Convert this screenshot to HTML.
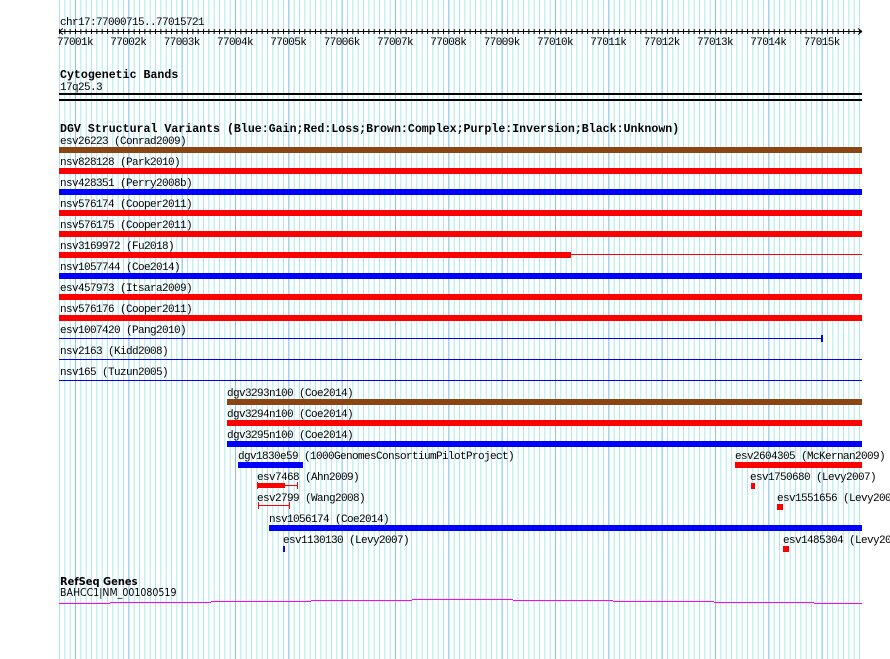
<!DOCTYPE html>
<html><head><meta charset="utf-8"><style>
html,body{margin:0;padding:0;background:#fff;}
svg{display:block;}
text{font-family:"Liberation Mono",monospace;font-size:11px;letter-spacing:-0.6px;fill:#000;}
.b{font-weight:bold;font-size:11.6px;letter-spacing:0;}
</style></head><body>
<svg width="890" height="659" xmlns="http://www.w3.org/2000/svg">
<defs>
<pattern id="mi" patternUnits="userSpaceOnUse" x="59" y="0" width="5.3333" height="10"><rect x="0" y="0" width="1" height="10" fill="#a8e8ee"/></pattern>
<pattern id="ma" patternUnits="userSpaceOnUse" x="75" y="0" width="53.333" height="10"><rect x="0" y="0" width="1" height="10" fill="#84c4ee"/></pattern>
<pattern id="tk" patternUnits="userSpaceOnUse" x="59" y="0" width="5.3333" height="10"><rect x="0" y="0" width="1" height="10" fill="#000"/></pattern>
</defs>
<rect x="59" y="0" width="804" height="659" fill="url(#mi)"/>
<rect x="59" y="0" width="804" height="659" fill="url(#ma)"/>

<text x="60" y="25">chr17:77000715..77015721</text>
<rect x="59" y="31" width="803" height="1" fill="#000"/>
<rect x="59" y="29" width="803" height="5" fill="url(#tk)"/>
<path d="M59 31.5 L63 28.5 M59 31.5 L63 34.5 M862 31.5 L858 28.5 M862 31.5 L858 34.5" stroke="#000" fill="none"/>
<g>
<text x="57" y="45">77001k</text><text x="110.3" y="45">77002k</text><text x="163.7" y="45">77003k</text><text x="217" y="45">77004k</text><text x="270.3" y="45">77005k</text><text x="323.7" y="45">77006k</text><text x="377" y="45">77007k</text><text x="430.3" y="45">77008k</text><text x="483.7" y="45">77009k</text><text x="537" y="45">77010k</text><text x="590.3" y="45">77011k</text><text x="643.7" y="45">77012k</text><text x="697" y="45">77013k</text><text x="750.3" y="45">77014k</text><text x="803.7" y="45">77015k</text>
</g>

<text class="b" x="60" y="78">Cytogenetic Bands</text>
<text x="60" y="90">17q25.3</text>
<rect x="59" y="93" width="803" height="2" fill="#000"/>
<rect x="59" y="99" width="803" height="2" fill="#000"/>

<text class="b" x="60" y="132">DGV Structural Variants (Blue:Gain;Red:Loss;Brown:Complex;Purple:Inversion;Black:Unknown)</text>
<text x="60" y="144">esv26223 (Conrad2009)</text><rect x="59" y="147" width="803" height="6" fill="#8b4513"/>
<text x="60" y="165">nsv828128 (Park2010)</text><rect x="59" y="168" width="803" height="6" fill="#f00"/>
<text x="60" y="186">nsv428351 (Perry2008b)</text><rect x="59" y="189" width="803" height="6" fill="#00f"/>
<text x="60" y="207">nsv576174 (Cooper2011)</text><rect x="59" y="210" width="803" height="6" fill="#f00"/>
<text x="60" y="228">nsv576175 (Cooper2011)</text><rect x="59" y="231" width="803" height="6" fill="#f00"/>
<text x="60" y="249">nsv3169972 (Fu2018)</text><rect x="59" y="252" width="512" height="6" fill="#f00"/><rect x="571" y="254" width="291" height="1" fill="#f00"/>
<text x="60" y="270">nsv1057744 (Coe2014)</text><rect x="59" y="273" width="803" height="6" fill="#00f"/>
<text x="60" y="291">esv457973 (Itsara2009)</text><rect x="59" y="294" width="803" height="6" fill="#f00"/>
<text x="60" y="312">nsv576176 (Cooper2011)</text><rect x="59" y="315" width="803" height="6" fill="#f00"/>
<text x="60" y="333">esv1007420 (Pang2010)</text><rect x="59" y="338" width="763" height="1" fill="#00f"/><rect x="821" y="335" width="2" height="7" fill="#00f"/>
<text x="60" y="354">nsv2163 (Kidd2008)</text><rect x="59" y="359" width="803" height="1" fill="#00f"/>
<text x="60" y="375">nsv165 (Tuzun2005)</text><rect x="59" y="380" width="803" height="1" fill="#00f"/>

<text x="227" y="396">dgv3293n100 (Coe2014)</text><rect x="227" y="399" width="635" height="6" fill="#8b4513"/>
<text x="227" y="417">dgv3294n100 (Coe2014)</text><rect x="227" y="420" width="635" height="6" fill="#f00"/>
<text x="227" y="438">dgv3295n100 (Coe2014)</text><rect x="227" y="441" width="635" height="6" fill="#00f"/>
<text x="238" y="459">dgv1830e59 (1000GenomesConsortiumPilotProject)</text><rect x="238" y="462" width="65" height="6" fill="#00f"/>
<text x="735" y="459">esv2604305 (McKernan2009)</text><rect x="735" y="462" width="127" height="6" fill="#f00"/>
<text x="257" y="480">esv7468 (Ahn2009)</text>
<rect x="257" y="483" width="28" height="5" fill="#f00"/><rect x="257" y="485" width="41" height="1" fill="#f00"/><rect x="257" y="482" width="1" height="7" fill="#f00"/><rect x="297" y="482" width="1" height="7" fill="#f00"/>
<text x="750" y="480">esv1750680 (Levy2007)</text><rect x="751" y="483" width="4" height="6" fill="#f00"/>
<text x="257" y="501">esv2799 (Wang2008)</text>
<rect x="258" y="505" width="32" height="1" fill="#f00"/><rect x="258" y="502" width="1" height="7" fill="#f00"/><rect x="289" y="502" width="1" height="7" fill="#f00"/>
<text x="777" y="501">esv1551656 (Levy2007)</text><rect x="777" y="504" width="6" height="6" fill="#f00"/>
<text x="269" y="522">nsv1056174 (Coe2014)</text><rect x="269" y="525" width="593" height="6" fill="#00f"/>
<text x="283" y="543">esv1130130 (Levy2007)</text><rect x="283" y="546" width="2" height="6" fill="#00f"/>
<text x="783" y="543">esv1485304 (Levy2007)</text><rect x="783" y="546" width="6" height="6" fill="#f00"/>

<text class="b" x="60" y="585" style="font-family:'DejaVu Sans Condensed','Liberation Sans',sans-serif;font-size:11px">RefSeq Genes</text>
<text x="60" y="596" style="font-family:'DejaVu Sans Condensed','Liberation Sans',sans-serif;font-size:10.5px;letter-spacing:0">BAHCC1|NM_001080519</text>
<g fill="#f0f">
<rect x="59" y="603" width="51" height="1"/><rect x="110" y="602" width="101" height="1"/><rect x="211" y="601" width="100" height="1"/><rect x="311" y="600" width="101" height="1"/><rect x="412" y="599" width="101" height="1"/><rect x="513" y="600" width="100" height="1"/><rect x="613" y="601" width="101" height="1"/><rect x="714" y="602" width="100" height="1"/><rect x="814" y="603" width="48" height="1"/>
</g>
</svg>
</body></html>
